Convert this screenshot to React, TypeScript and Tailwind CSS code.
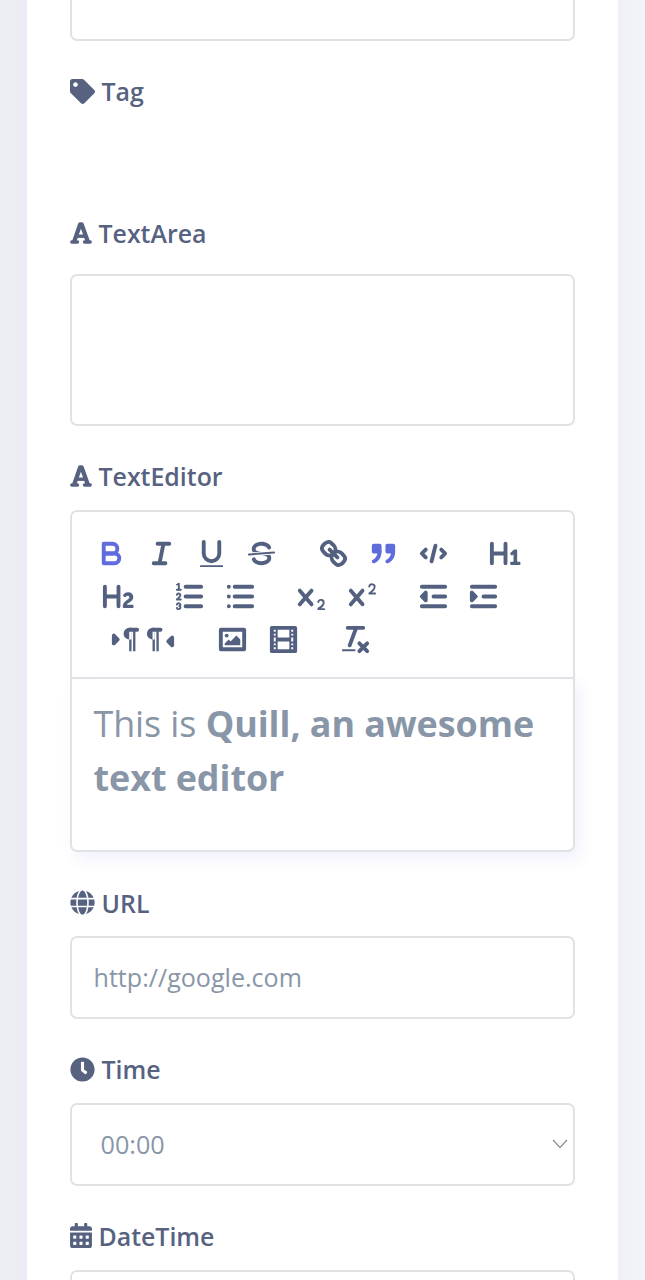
import type { ReactNode } from "react";
import { FaTag, FaGlobe, FaClock, FaCalendarAlt } from "react-icons/fa";

function Tool({ children, narrow = false, active = false }: { children: ReactNode; narrow?: boolean; active?: boolean }) {
  return (
    <button
      className={`flex h-[43px] shrink-0 items-center justify-center ${narrow ? "w-[35.4px]" : "w-[50.3px]"} ${active ? "text-[#606cdb]" : "text-[#53607f]"}`}
    >
      <svg viewBox="0 0 18 18" className="size-[35px] shrink-0" fill="none" stroke="currentColor" strokeWidth="2" strokeLinecap="round" strokeLinejoin="round">
        {children}
      </svg>
    </button>
  );
}

const fill = { fill: "currentColor", stroke: "none" };

function FontIcon() {
  return (
    <svg viewBox="0 0 22 24" className="h-[24px] w-[22px] shrink-0" fill="none" stroke="currentColor">
      <path strokeWidth="4.3" strokeLinejoin="round" d="M4.2 20.4L10.2 3.3H11.6L17.8 20.4" />
      <path strokeWidth="3.4" d="M6.2 15.2H15.8" />
      <path strokeWidth="3.6" strokeLinecap="round" d="M1.9 21H7.4M14.6 21H20.1" />
    </svg>
  );
}

function Label({ icon, children, className = "" }: { icon: ReactNode; children: ReactNode; className?: string }) {
  return (
    <div className={`flex h-[34px] items-center gap-[6.5px] text-[24.9px] leading-[34px] font-semibold text-[#56627f] ${className}`}>
      {icon}
      <span>{children}</span>
    </div>
  );
}

const box = "rounded-[7px] border-2 border-[#e1e2e6] bg-white";

export default function App() {
  return (
    <div className="h-[1280px] overflow-hidden bg-[linear-gradient(90deg,#edeff4_0px,#ecedf4_16px,#eaebf5_27px,#eef0f6_618px,#f3f4fa_645px)] pl-[27px] font-['Open_Sans',sans-serif]">
      <div className="h-[1280px] w-[590.5px] bg-white pr-[42.5px] pl-[43px]">
        <div className="h-[41px] rounded-b-[7px] border-2 border-t-0 border-[#e1e2e6]" />
        <Label icon={<FaTag className="size-[25px]" />} className="mt-[33px]">Tag</Label>
        <Label icon={<FontIcon />} className="mt-[108px]">TextArea</Label>
        <div className={`mt-[23.5px] h-[152.5px] ${box}`} />
        <Label icon={<FontIcon />} className="mt-[33.4px]">TextEditor</Label>

        <div className="mt-[16.6px] h-[342px]">
          <div className="h-[167px] rounded-t-[7px] border-2 border-b-0 border-[#e1e2e6] pt-[20.3px] pl-[13.9px]">
            <div className="flex">
              <Tool active>
                <path d="M5,4H9.5A2.5,2.5,0,0,1,12,6.5v0A2.5,2.5,0,0,1,9.5,9H5Z" />
                <path d="M5,9h5.5A2.5,2.5,0,0,1,13,11.5v0A2.5,2.5,0,0,1,10.5,14H5Z" />
              </Tool>
              <Tool>
                <path d="M7 4H13M5 14H11M8 14L10 4" />
              </Tool>
              <Tool>
                <path d="M5,3V9a4.012,4.012,0,0,0,4,4H9a4.012,4.012,0,0,0,4-4V3" />
                <rect {...fill} x="3" y="15" width="12" height="1" rx="0.5" />
              </Tool>
              <Tool>
                <path strokeWidth="1" d="M15.5 8.5L2.5 9.5" />
                <path {...fill} d="M9.007,8C6.542,7.791,6,7.519,6,6.5,6,5.792,7.283,5,9,5c1.571,0,2.765.679,2.969,1.309a1,1,0,0,0,1.9-.617C13.356,4.106,11.354,3,9,3,6.2,3,4,4.538,4,6.5a3.2,3.2,0,0,0,.5,1.843Z" />
                <path {...fill} d="M8.984,10C11.457,10.208,12,10.479,12,11.5c0,0.708-1.283,1.5-3,1.5-1.571,0-2.765-.679-2.969-1.309a1,1,0,1,0-1.9.617C4.644,13.894,6.646,15,9,15c2.8,0,5-1.538,5-3.5a3.2,3.2,0,0,0-.5-1.843Z" />
              </Tool>
              <div className="w-[21px]" />
              <Tool>
                <path d="M7 7L11 11" />
                <path d="M8.9,4.577a3.476,3.476,0,0,1,.36,4.679A3.476,3.476,0,0,1,4.577,8.9C3.185,7.5,2.035,6.4,4.217,4.217S7.5,3.185,8.9,4.577Z" />
                <path d="M13.423,9.1a3.476,3.476,0,0,0-4.679-.36,3.476,3.476,0,0,0,.36,4.679c1.392,1.392,2.5,2.542,4.679.36S14.815,10.5,13.423,9.1Z" />
              </Tool>
              <Tool active>
                <rect fill="currentColor" x="4" y="5" width="3" height="3" />
                <rect fill="currentColor" x="11" y="5" width="3" height="3" />
                <path fill="currentColor" d="M7,8c0,4.031-3,5-3,5" />
                <path fill="currentColor" d="M14,8c0,4.031-3,5-3,5" />
              </Tool>
              <Tool>
                <polyline points="5 7 3 9 5 11" />
                <polyline points="13 7 15 9 13 11" />
                <path d="M10 5L8 13" />
              </Tool>
              <div className="w-[21.3px]" />
              <Tool>
                <path {...fill} d="M10,4V14a1,1,0,0,1-2,0V10H3v4a1,1,0,0,1-2,0V4A1,1,0,0,1,3,4V8H8V4a1,1,0,0,1,2,0Zm6.06787,9.209H14.98975V7.59863a.54085.54085,0,0,0-.605-.60547h-.62744a1.01119,1.01119,0,0,0-.748.29688L11.645,8.56641a.5435.5435,0,0,0-.022.8584l.28613.30762a.53861.53861,0,0,0,.84717.0332l.09912-.08789a1.2137,1.2137,0,0,0,.2417-.35254h.02246s-.01123.30859-.01123.60547V13.209H12.041a.54085.54085,0,0,0-.605.60547v.43945a.54085.54085,0,0,0,.605.60547h4.02686a.54085.54085,0,0,0,.605-.60547v-.43945A.54085.54085,0,0,0,16.06787,13.209Z" />
              </Tool>
            </div>
            <div className="flex pl-[7px]">
              <Tool>
                <path {...fill} d="M16.73975,13.81445v.43945a.54085.54085,0,0,1-.605.60547H11.855a.58392.58392,0,0,1-.64893-.60547V14.0127c0-2.90527,3.39941-3.42187,3.39941-4.55469a.77675.77675,0,0,0-.84717-.78125,1.17684,1.17684,0,0,0-.83594.38477c-.2749.26367-.561.374-.85791.13184l-.4292-.34082c-.30811-.24219-.38525-.51758-.1543-.81445a2.97155,2.97155,0,0,1,2.45361-1.17676,2.45393,2.45393,0,0,1,2.68408,2.40918c0,2.45312-3.1792,2.92676-3.27832,3.93848h2.79443A.54085.54085,0,0,1,16.73975,13.81445ZM9,3A.99974.99974,0,0,0,8,4V8H3V4A1,1,0,0,0,1,4V14a1,1,0,0,0,2,0V10H8v4a1,1,0,0,0,2,0V4A.99974.99974,0,0,0,9,3Z" />
              </Tool>
              <div className="w-[21.4px]" />
              <Tool>
                <path d="M7 4H15M7 9H15M7 14H15" />
                <path strokeWidth="1" d="M2.5 5.5H4.5" />
                <path {...fill} d="M3.5,6A0.5,0.5,0,0,1,3,5.5V3.085l-0.276.138A0.5,0.5,0,0,1,2.053,3c-0.124-.247-0.023-0.324.224-0.447l1-.5A0.5,0.5,0,0,1,4,2.5v3A0.5,0.5,0,0,1,3.5,6Z" />
                <path strokeWidth="1" d="M4.5,10.5h-2c0-.234,1.85-1.076,1.85-2.234A0.959,0.959,0,0,0,2.5,8.156" />
                <path strokeWidth="1" d="M2.5,14.846a0.959,0.959,0,0,0,1.85-.109A0.7,0.7,0,0,0,3.75,14a0.688,0.688,0,0,0,.6-0.736,0.959,0.959,0,0,0-1.85-.109" />
              </Tool>
              <Tool>
                <path d="M6 4H15M6 9H15M6 14H15M3 4H3M3 9H3M3 14H3" />
              </Tool>
              <div className="w-[21.4px]" />
              <Tool>
                <path {...fill} d="M15.5,15H13.861a3.858,3.858,0,0,0,1.914-2.975,1.8,1.8,0,0,0-1.6-1.751A1.921,1.921,0,0,0,12.021,11.7a0.50013,0.50013,0,1,0,.957.291h0a0.914,0.914,0,0,1,1.053-.725,0.81,0.81,0,0,1,.744.762c0,1.076-1.16971,1.86982-1.93971,2.43082A1.45639,1.45639,0,0,0,12,15.5a0.5,0.5,0,0,0,.5.5h3A0.5,0.5,0,0,0,15.5,15Z" />
                <path {...fill} d="M9.65,5.241a1,1,0,0,0-1.409.108L6,7.964,3.759,5.349A1,1,0,0,0,2.192,6.59178Q2.21541,6.6213,2.241,6.649L4.684,9.5,2.241,12.35A1,1,0,0,0,3.71,13.70722q0.02557-.02768.049-0.05722L6,11.036,8.241,13.65a1,1,0,1,0,1.567-1.24277Q9.78459,12.3777,9.759,12.35L7.316,9.5,9.759,6.651A1,1,0,0,0,9.65,5.241Z" />
              </Tool>
              <Tool>
                <path {...fill} d="M15.5,7H13.861a4.015,4.015,0,0,0,1.914-2.975,1.8,1.8,0,0,0-1.6-1.751A1.922,1.922,0,0,0,12.021,3.7a0.5,0.5,0,1,0,.957.291,0.917,0.917,0,0,1,1.053-.725,0.81,0.81,0,0,1,.744.762c0,1.077-1.164,1.925-1.934,2.486A1.423,1.423,0,0,0,12,7.5a0.5,0.5,0,0,0,.5.5h3A0.5,0.5,0,0,0,15.5,7Z" />
                <path {...fill} d="M9.651,5.241a1,1,0,0,0-1.41.108L6,7.964,3.759,5.349a1,1,0,1,0-1.519,1.3L4.683,9.5,2.241,12.35a1,1,0,1,0,1.519,1.3L6,11.036,8.241,13.65a1,1,0,0,0,1.519-1.3L7.317,9.5,9.759,6.651A1,1,0,0,0,9.651,5.241Z" />
              </Tool>
              <div className="w-[21.4px]" />
              <Tool>
                <path d="M3 14H15M3 4H15M9 9H15" />
                <polygon fill="currentColor" points="5 7 5 11 3 9" />
              </Tool>
              <Tool>
                <path d="M3 14H15M3 4H15M9 9H15" />
                <polygon fill="currentColor" points="3 7 3 11 5 9" />
              </Tool>
            </div>
            <div className="flex pl-[22px]">
              <Tool narrow>
                <polygon fill="currentColor" points="3 11 5 9 3 7" />
                <path d="M15 4H11" />
                <path {...fill} d="M11,3a3,3,0,0,0,0,6h1V3H11ZM10.9 4h1.2v11h-1.2zM12.9 4h1.2v11h-1.2z" />
              </Tool>
              <Tool narrow>
                <polygon fill="currentColor" points="15 12 13 10 15 8" />
                <path d="M9 4H5" />
                <path {...fill} d="M5,3A3,3,0,0,0,5,9H6V3H5ZM4.9 4h1.2v11H4.9zM6.9 4h1.2v11H6.9z" />
              </Tool>
              <div className="w-[29px]" />
              <Tool>
                <rect x="3" y="4" width="12" height="10" />
                <circle {...fill} cx="6" cy="7" r="1" />
                <polyline {...fill} points="5 12 5 11 7 9 8 10 11 7 13 9 13 12 5 12" />
              </Tool>
              <Tool>
                <rect x="3" y="3" width="12" height="12" />
                <path {...fill} d="M5 3h1v12H5zM12 3h1v12h-1zM5 8h8v2H5zM3 5h3v1H3zM3 7h3v1H3zM3 10h3v1H3zM3 12h3v1H3zM12 5h3v1h-3zM12 7h3v1h-3zM12 10h3v1h-3zM12 12h3v1h-3z" />
              </Tool>
              <div className="w-[21.6px]" />
              <Tool>
                <path d="M5 3H13M6 12L9.35 3M11 11L15 15M15 11L11 15" />
                <rect {...fill} x="2" y="14" width="7" height="1" rx="0.5" />
              </Tool>
            </div>
          </div>
          <div className="h-[175px] rounded-b-[7px] border-2 border-[#e1e2e6] pt-[18px] pl-[21.5px] text-[35.9px] leading-[54px] text-[#8896a8] shadow-[5px_7px_16px_rgba(90,100,220,0.09)]">
            <span className="tracking-[-0.08px]">This is </span><span className="font-bold tracking-[-0.05px]">Quill, an awesome<br />text editor</span>
          </div>
        </div>

        <Label icon={<FaGlobe className="size-[25px]" />} className="mt-[34px]">URL</Label>
        <div className={`mt-[16px] flex h-[83px] items-center pl-[21.5px] text-[25.1px] text-[#8896a8] ${box}`}>http://google.com</div>
        <Label icon={<FaClock className="size-[25px]" />} className="mt-[33.4px]">Time</Label>
        <div className={`mt-[16.6px] flex h-[83px] items-center justify-between pr-[5px] pl-[28.5px] text-[25.2px] text-[#8896a8] ${box}`}>
          <span>00:00</span>
          <svg viewBox="0 0 16 10" className="h-[10px] w-[16px]" fill="none" stroke="#8b939c" strokeWidth="1.2">
            <path d="M1 1L8 8.5L15 1" />
          </svg>
        </div>
        <Label icon={<FaCalendarAlt className="h-[25px] w-[22px]" />} className="mt-[33px]">DateTime</Label>
        <div className={`mt-[17px] h-[83px] ${box}`} />
      </div>
    </div>
  );
}
